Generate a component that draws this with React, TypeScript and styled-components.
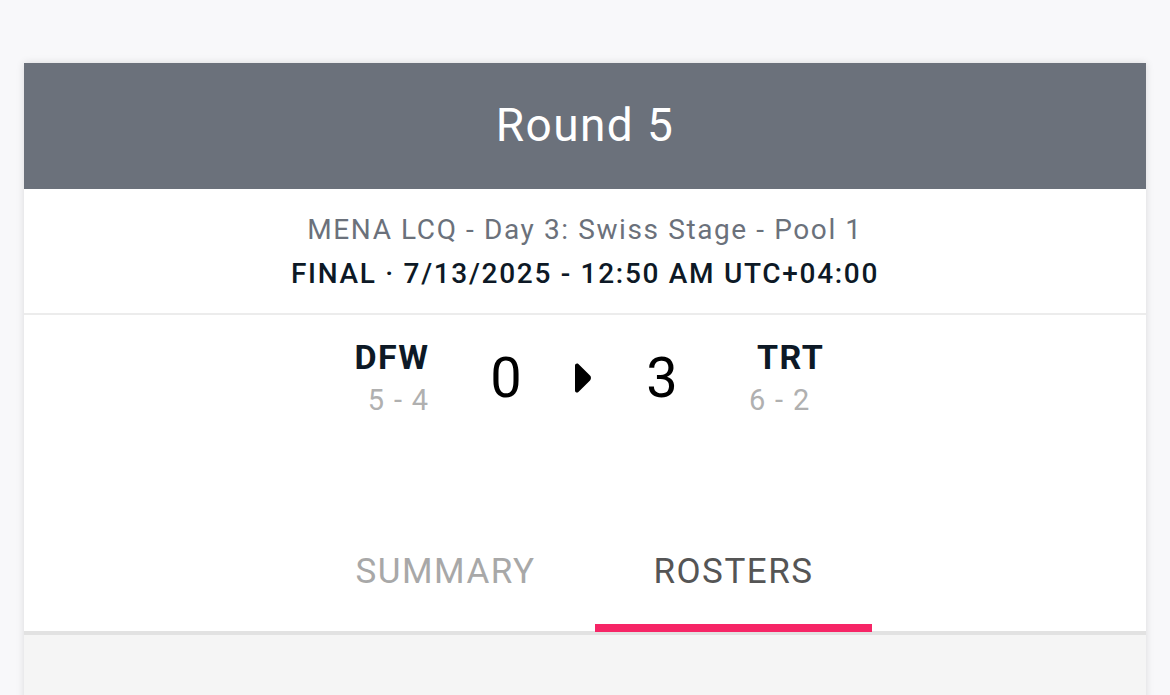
import React from "react";
import styled, { createGlobalStyle } from "styled-components";

const Global = createGlobalStyle`
  html, body { margin: 0; padding: 0; background: #f8f8fa; }
  body { font-family: Roboto, "Noto Sans", Arial, sans-serif; overflow: hidden; }
  * { box-sizing: border-box; }
`;

const Page = styled.div`
  width: 1170px;
  height: 695px;
  padding: 63px 24px 0 24px;
  overflow: hidden;
`;

const Card = styled.div`
  background: #fff;
  box-shadow: 0 0 8px rgba(0, 0, 0, 0.12);
  min-height: 700px;
`;

const Header = styled.div`
  height: 126px;
  background: #6b717b;
  display: flex;
  align-items: center;
  justify-content: center;
  color: #fff;
  font-size: 46px;
  font-weight: 400;
  letter-spacing: 1.4px;
  padding-bottom: 2px;
`;

const Info = styled.div`
  height: 126px;
  display: flex;
  flex-direction: column;
  align-items: center;
  padding-top: 22px;
  border-bottom: 2px solid #ececec;
`;

const Subtitle = styled.div`
  color: #6b717b;
  font-size: 28px;
  line-height: 38px;
  letter-spacing: 1.6px;
`;

const Status = styled.div`
  color: #0d1926;
  font-size: 28px;
  font-weight: 500;
  line-height: 38px;
  margin-top: 6px;
  letter-spacing: 1.7px;
`;

const ScoreSection = styled.div`
  height: 205px;
  padding-top: 22px;
  display: flex;
  justify-content: center;
`;

const ScoreRow = styled.div`
  display: flex;
  align-items: center;
  height: 81px;
  padding-left: 7px;
`;

const Team = styled.div<{ $side: "left" | "right" }>`
  width: 120px;
  display: flex;
  flex-direction: column;
  align-items: ${(p) => (p.$side === "left" ? "flex-end" : "flex-start")};
`;

const TeamName = styled.div<{ $indent?: number }>`
  font-size: 34px;
  font-weight: 700;
  color: #0d1926;
  line-height: 40px;
  letter-spacing: 1.5px;
  margin-right: -1.5px;
  padding-left: ${(p) => p.$indent ?? 0}px;
`;

const Record = styled.div`
  font-size: 29px;
  color: #b0b0b0;
  line-height: 36px;
  margin-top: 5px;
  letter-spacing: 1.3px;
  margin-right: -1.3px;
`;

const Score = styled.div<{ $gapLeft: number }>`
  width: 60px;
  text-align: center;
  font-size: 56px;
  line-height: 60px;
  color: #000;
  margin-left: ${(p) => p.$gapLeft}px;
`;

const Arrow = styled.div`
  width: 96px;
  display: flex;
  justify-content: center;
  align-items: center;
  padding-right: 5px;
`;

const TabBar = styled.div`
  display: flex;
  justify-content: center;
  gap: 11px;
  padding-left: 9px;
  border-bottom: 4px solid #e2e2e2;
`;

const Tab = styled.div<{ $active?: boolean }>`
  width: 277px;
  height: 112px;
  padding-top: 32px;
  text-align: center;
  font-size: 35px;
  line-height: 40px;
  letter-spacing: 1.5px;
  color: ${(p) => (p.$active ? "#555555" : "#a8a8a8")};
  border-bottom: 8px solid ${(p) => (p.$active ? "#f62566" : "transparent")};
  margin-bottom: -1px;
`;

const Body = styled.div`
  background: #f5f5f5;
  height: 200px;
`;

export default function App() {
  return (
    <>
      <Global />
      <Page>
        <Card>
          <Header>Round 5</Header>
          <Info>
            <Subtitle>MENA LCQ - Day 3: Swiss Stage - Pool 1</Subtitle>
            <Status>FINAL · 7/13/2025 - 12:50 AM UTC+04:00</Status>
          </Info>
          <ScoreSection>
            <ScoreRow>
              <Team $side="left">
                <TeamName>DFW</TeamName>
                <Record>5 - 4</Record>
              </Team>
              <Score $gapLeft={48}>0</Score>
              <Arrow>
                <svg width="20" height="32" viewBox="0 0 20 32">
                  <path
                    d="M3 3.5 C3 1.6 5 0.8 6.4 1.9 L18 13.6 C19.3 14.9 19.3 17.1 18 18.4 L6.4 30.1 C5 31.2 3 30.4 3 28.5 Z"
                    fill="#000"
                  />
                </svg>
              </Arrow>
              <Score $gapLeft={0}>3</Score>
              <Team $side="right" style={{ marginLeft: 57 }}>
                <TeamName $indent={8}>TRT</TeamName>
                <Record>6 - 2</Record>
              </Team>
            </ScoreRow>
          </ScoreSection>
          <TabBar>
            <Tab>SUMMARY</Tab>
            <Tab $active>ROSTERS</Tab>
          </TabBar>
          <Body />
        </Card>
      </Page>
    </>
  );
}
